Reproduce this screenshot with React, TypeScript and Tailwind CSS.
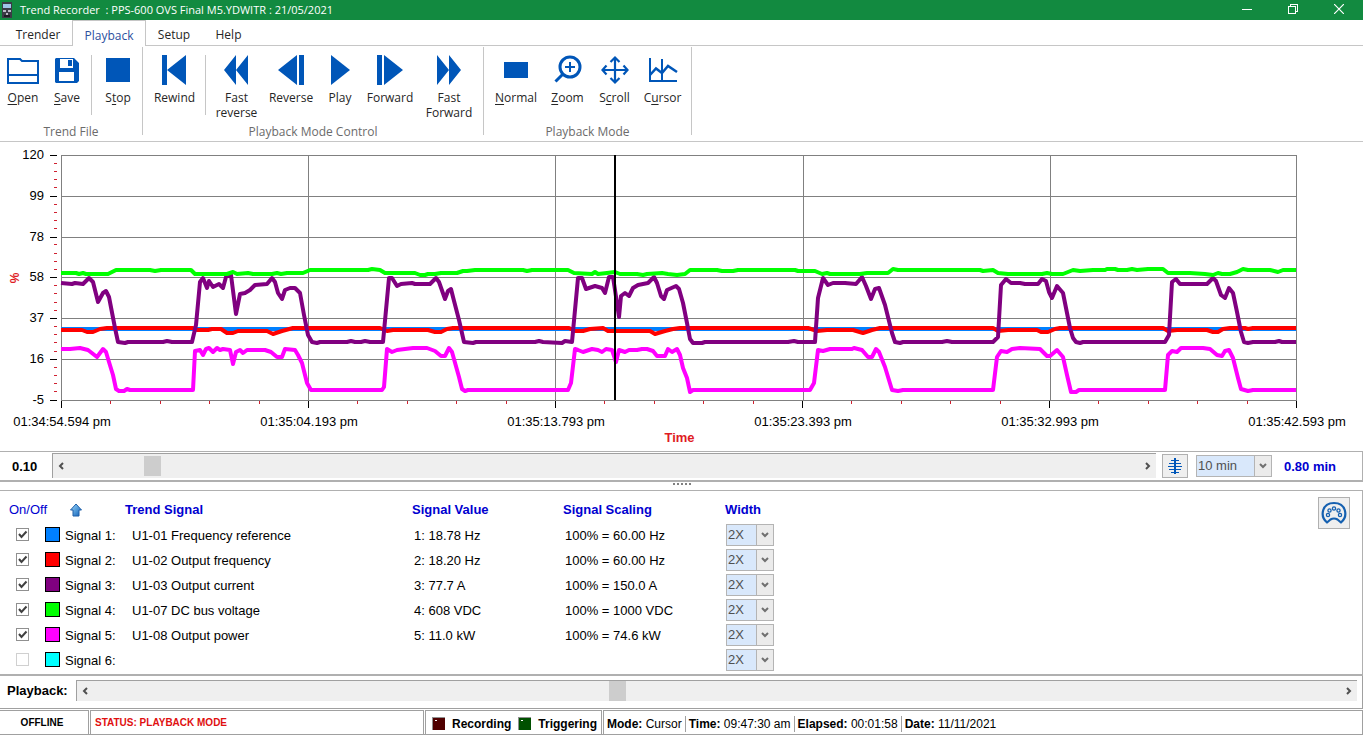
import { useState, type ReactNode } from 'react'
import clsx from 'clsx'

type Tool = {
  label: string
  // index of the underlined access key, if the command has one
  accessKey?: number
  width: string
  icon: ReactNode
  dividerAfter?: boolean
}

const TABS = [
  { name: 'Trender', width: 'w-[72px] pl-1' },
  { name: 'Playback', width: 'w-[74px]' },
  { name: 'Setup', width: 'w-[56px]' },
  { name: 'Help', width: 'w-[53px]' },
]

const TOOL_GROUPS: { title: string; className: string; tools: Tool[] }[] = [
  {
    title: 'Trend File',
    className: 'pr-px',
    tools: [
      {
        label: 'Open',
        accessKey: 0,
        width: 'w-[46px]',
        icon: (
          <svg width="32" height="30" viewBox="0 0 32 30" fill="none" stroke="#0056b8" strokeWidth="2">
            <path d="M1 28V4h12l2 2h16v22zM1 20h30" />
          </svg>
        ),
      },
      {
        label: 'Save',
        accessKey: 0,
        width: 'w-[42px]',
        dividerAfter: true,
        icon: (
          <svg width="26" height="30" viewBox="0 0 26 30" fill="#0056b8">
            <path
              fillRule="evenodd"
              d="M2 3h18l5 5v18l-2 2H2l-1-1V4zM6 4v9h13V4zM5 17v9h15v-9zM14 5h4v6h-4z"
            />
          </svg>
        ),
      },
      {
        label: 'Stop',
        accessKey: 1,
        width: 'w-[46px]',
        icon: (
          <svg width="24" height="30" viewBox="0 0 24 30" fill="#0056b8">
            <path d="M0 3h24v24H0z" />
          </svg>
        ),
      },
    ],
  },
  {
    title: 'Playback Mode Control',
    className: 'pr-[3px] pl-1',
    tools: [
      {
        label: 'Rewind',
        width: 'w-[55px]',
        dividerAfter: true,
        icon: (
          <svg width="25" height="30" viewBox="0 0 25 30" fill="#0056b8">
            <path d="M0 0h5v30H0zM24 0v30L5 15z" />
          </svg>
        ),
      },
      {
        label: 'Fast reverse',
        width: 'w-[55px]',
        icon: (
          <svg width="26" height="30" viewBox="0 0 26 30" fill="#0056b8">
            <path d="M12 0v30L0 15zM24 0v30L12 15z" />
          </svg>
        ),
      },
      {
        label: 'Reverse',
        width: 'w-[54px]',
        icon: (
          <svg width="26" height="30" viewBox="0 0 26 30" fill="#0056b8">
            <path d="M19 0v30L0 15zM21 0h5v30h-5z" />
          </svg>
        ),
      },
      {
        label: 'Play',
        width: 'w-[44px]',
        icon: (
          <svg width="20" height="30" viewBox="0 0 20 30" fill="#0056b8">
            <path d="M1 0v30l19-15z" />
          </svg>
        ),
      },
      {
        label: 'Forward',
        width: 'w-[56px]',
        icon: (
          <svg width="26" height="30" viewBox="0 0 26 30" fill="#0056b8">
            <path d="M0 0h5v30H0zM7 0v30l19-15z" />
          </svg>
        ),
      },
      {
        label: 'Fast Forward',
        width: 'w-[62px]',
        icon: (
          <svg width="24" height="30" viewBox="0 0 24 30" fill="#0056b8">
            <path d="M0 0v30l12-15zM12 0v30l12-15z" />
          </svg>
        ),
      },
    ],
  },
  {
    title: 'Playback Mode',
    className: 'px-1',
    tools: [
      {
        label: 'Normal',
        accessKey: 0,
        width: 'w-[56px]',
        icon: (
          <svg width="24" height="30" viewBox="0 0 24 30" fill="#0056b8">
            <path d="M0 7h24v16H0z" />
          </svg>
        ),
      },
      {
        label: 'Zoom',
        accessKey: 0,
        width: 'w-[47px]',
        icon: (
          <svg width="28" height="30" viewBox="0 0 28 30" fill="none" stroke="#0056b8">
            <circle cx="16" cy="12" r="10" strokeWidth="3" />
            <path d="M16 7v10M11 12h10" strokeWidth="2" />
            <path d="M9 19L1.500 26.500" strokeWidth="3" />
          </svg>
        ),
      },
      {
        label: 'Scroll',
        accessKey: 1,
        width: 'w-[47px]',
        icon: (
          <svg width="28" height="30" viewBox="0 0 28 30" fill="none" stroke="#0056b8" strokeWidth="2.200">
            <path d="M14 3v25M2 15h24M9.500 7L14 2.500 18.500 7M9.500 23l4.500 4.500 4.500-4.500M5.500 10.500L1.500 15l4 4.500M22.500 10.500l4 4.500-4 4.500" />
          </svg>
        ),
      },
      {
        label: 'Cursor',
        accessKey: 1,
        width: 'w-[49px]',
        icon: (
          <svg width="30" height="30" viewBox="0 0 30 30" fill="none" stroke="#0056b8" strokeWidth="2">
            <path d="M2 3v23h27M14 4v22" />
            <path d="M2 20l6-6.500 6 4.500 6-7 9 6" strokeWidth="2.500" />
          </svg>
        ),
      },
    ],
  },
]

const SIGNALS = [
  { on: true, color: 'bg-[#0080ff]', name: 'U1-01 Frequency reference', value: '1: 18.78 Hz', scaling: '100% = 60.00 Hz' },
  { on: true, color: 'bg-[#ff0000]', name: 'U1-02 Output frequency', value: '2: 18.20 Hz', scaling: '100% = 60.00 Hz' },
  { on: true, color: 'bg-[#800080]', name: 'U1-03 Output current', value: '3: 77.7 A', scaling: '100% = 150.0 A' },
  { on: true, color: 'bg-[#00ff00]', name: 'U1-07 DC bus voltage', value: '4: 608 VDC', scaling: '100% = 1000 VDC' },
  { on: true, color: 'bg-[#ff00ff]', name: 'U1-08 Output power', value: '5: 11.0 kW', scaling: '100% = 74.6 kW' },
  { on: false, color: 'bg-[#00ffff]', name: '', value: '', scaling: '' },
]

const Y_LABELS = ['120', '99', '78', '58', '37', '16', '-5']

const TIME_LABELS = [
  '01:34:54.594 pm',
  '01:35:04.193 pm',
  '01:35:13.793 pm',
  '01:35:23.393 pm',
  '01:35:32.993 pm',
  '01:35:42.593 pm',
]

// Grid and traces share the plot's viewBox: x 61..1296, y 155..400
const GRID_X = [61, 308, 555, 803, 1050, 1296]
const GRID_Y = [155, 196, 237, 277, 318, 359, 400]

const TRACES = [
  { color: '#0080ff', points: '61,329 1296,329' },
  {
    color: '#ff0000',
    points:
      '61,330 82,330 87,332 93,332 100,329 107,328 193,328 197,330 208,330 212,329 221,329 227,333 233,333 238,331 267,331 273,334 282,331 293,328 380,328 387,331 393,330 428,330 435,332 441,332 447,329 453,328 569,328 575,331 583,331 590,329 603,328 608,331 650,331 655,334 665,331 673,329 680,328 808,328 817,331 827,330 853,330 863,333 872,330 880,328 993,328 998,331 1008,330 1037,330 1041,332 1048,332 1055,329 1060,328 1163,328 1168,331 1177,330 1207,330 1213,332 1218,332 1223,329 1230,328 1245,328 1248,329 1253,328 1296,328',
  },
  {
    color: '#800080',
    points:
      '61,283 72,284 75,283 83,284 89,278 93,282 98,302 103,293 106,291 109,297 115,328 118,342 125,343 128,342 163,342 167,341 172,342 192,342 196,325 200,282 203,278 207,288 209,281 213,287 219,284 223,288 226,277 231,275 236,314 240,294 245,293 250,290 255,285 267,284 272,278 275,282 278,293 282,299 285,290 290,288 295,288 300,293 304,315 308,335 312,342 317,343 320,342 347,342 351,341 355,342 361,342 365,341 370,342 383,342 389,278 392,278 397,286 401,284 412,283 415,284 430,284 436,278 439,282 445,299 448,291 451,289 453,297 459,320 464,342 473,343 476,342 535,342 539,341 543,342 562,343 565,341 572,342 578,278 582,278 586,289 595,286 602,288 605,293 609,277 613,277 615,290 619,317 621,296 625,293 629,296 633,288 638,285 648,283 654,277 657,283 661,296 664,299 667,290 676,286 679,289 683,303 687,323 690,339 693,343 702,343 705,342 788,342 794,341 798,342 815,342 818,298 823,278 828,285 833,283 845,283 856,284 862,277 866,286 871,299 875,289 879,288 885,305 892,333 895,342 900,343 903,342 942,342 947,341 952,342 993,342 998,337 1001,285 1006,279 1011,283 1020,283 1025,284 1038,284 1042,279 1046,281 1049,292 1052,298 1057,286 1063,293 1070,328 1073,338 1076,342 1080,343 1083,342 1165,342 1169,335 1172,282 1176,279 1180,284 1207,284 1213,278 1216,281 1221,295 1225,298 1229,288 1233,293 1237,312 1241,332 1244,342 1248,343 1253,342 1275,342 1279,341 1282,342 1296,342',
  },
  {
    color: '#00ff00',
    points:
      '61,273 76,273 79,274 83,273 86,274 108,274 116,270 150,270 155,271 161,270 191,270 195,274 227,274 233,272 237,274 248,273 253,274 272,274 277,273 281,274 287,273 303,273 310,270 368,270 372,269 380,270 385,273 415,273 420,275 425,275 428,274 435,274 441,273 457,273 463,271 467,271 475,270 523,270 527,271 532,270 568,270 574,273 592,274 595,272 598,274 607,273 615,272 620,274 637,274 643,275 647,274 662,273 668,274 677,275 685,274 690,270 717,270 722,271 733,271 738,270 795,270 798,271 815,271 822,274 827,273 830,274 860,274 867,273 888,273 893,269 898,270 980,270 983,271 993,270 998,273 1008,274 1042,274 1047,273 1052,274 1063,274 1073,270 1080,271 1093,270 1105,270 1107,269 1115,269 1118,270 1127,270 1132,269 1137,270 1148,269 1163,269 1168,273 1190,273 1205,274 1213,275 1218,273 1222,274 1230,274 1237,272 1243,269 1248,270 1270,270 1278,272 1283,270 1296,270',
  },
  {
    color: '#ff00ff',
    points:
      '61,349 70,349 80,348 88,350 97,357 103,349 106,352 109,362 113,375 116,389 119,391 124,391 127,389 130,390 193,390 195,351 200,350 203,355 206,349 209,348 213,352 217,348 220,350 223,349 230,350 233,364 236,352 240,350 243,353 247,350 265,350 271,352 277,357 282,357 285,349 295,350 298,355 302,363 307,383 311,390 382,390 384,387 387,349 392,352 397,350 413,348 427,348 435,351 441,356 445,356 449,348 452,352 459,377 462,389 465,391 468,390 568,390 571,383 575,349 578,350 583,352 592,349 598,350 602,352 606,349 612,350 616,362 619,350 625,352 629,350 637,350 642,349 647,349 653,351 657,356 665,356 668,349 672,352 677,349 680,355 683,368 687,378 690,392 693,390 810,390 814,383 818,350 823,351 830,349 852,349 854,348 862,350 868,357 872,357 876,349 879,352 885,367 892,390 898,391 903,390 993,390 997,357 1001,351 1007,352 1012,349 1020,348 1040,349 1047,356 1050,356 1057,350 1063,357 1067,375 1071,392 1076,392 1079,390 1165,390 1168,355 1172,351 1177,352 1181,348 1203,348 1210,349 1217,355 1222,356 1225,351 1229,350 1233,358 1238,378 1241,389 1248,391 1253,390 1296,390',
  },
]

const range = (n: number) => Array.from({ length: n }, (_, i) => i)

function AccessLabel({ text, accessKey }: { text: string; accessKey?: number }) {
  if (accessKey === undefined) return <>{text}</>
  return (
    <>
      {text.slice(0, accessKey)}
      <span className="underline underline-offset-2">{text[accessKey]}</span>
      {text.slice(accessKey + 1)}
    </>
  )
}

function TitleBar() {
  return (
    <header className="flex h-5 items-center bg-[#128a40] pl-0.5 font-['Open_Sans',sans-serif] text-[11px] text-white">
      <svg width="10" height="16" viewBox="0 0 10 16" className="mr-2">
        <path d="M0 0h10v16H0z" fill="#3b3b46" />
        <path d="M1 2h8v4H1z" fill="#9fc4ea" />
        <path d="M1 8h3v2H1zM6 8h3v2H6zM4 11h2v2H4z" fill="#b9b9c4" />
        <path d="M2 13h6v2H2z" fill="#1c1c22" />
      </svg>
      <h1 className="flex-1 whitespace-pre leading-4">Trend Recorder  : PPS-600 OVS Final M5.YDWITR : 21/05/2021</h1>
      <button type="button" aria-label="Minimize" className="flex h-4 w-[46px] items-center justify-center">
        <svg width="10" height="10" viewBox="0 0 10 10" stroke="white" shapeRendering="crispEdges">
          <path d="M0 4.500h10" />
        </svg>
      </button>
      <button type="button" aria-label="Restore" className="flex h-4 w-[45px] items-start justify-center pt-0.5">
        <svg width="10" height="10" viewBox="0 0 10 10" fill="none" stroke="white" shapeRendering="crispEdges">
          <path d="M.5 2.500h7v7h-7zM2.500 2.500v-2h7v7h-2" />
        </svg>
      </button>
      <button type="button" aria-label="Close" className="flex h-4 w-12 items-start justify-center pt-0.5">
        <svg width="10" height="10" viewBox="0 0 10 10" stroke="white" strokeWidth="1.200">
          <path d="M0 0l10 10M10 0L0 10" />
        </svg>
      </button>
    </header>
  )
}

function Ribbon() {
  const [tab, setTab] = useState('Playback')

  return (
    <div className="border-b border-[#c6c6c6] font-['Open_Sans',sans-serif] text-xs text-[#262626]">
      <nav className="flex h-[26px] items-stretch">
        {TABS.map(({ name, width }) => (
          <button
            key={name}
            type="button"
            onClick={() => setTab(name)}
            className={clsx(
              width,
              'border-[#c6c6c6] pt-1',
              tab === name ? 'border-x border-t text-[#2b4f9e]' : 'border-b pt-[5px]',
            )}
          >
            {name}
          </button>
        ))}
        <div className="flex-1 border-b border-[#c6c6c6]" />
      </nav>
      <div className="flex h-[95px] pt-px">
        {TOOL_GROUPS.map((group) => (
          <section key={group.title} className="flex h-[88px] flex-col border-r border-[#c6c6c6]">
            <div className={clsx('flex h-[78px] shrink-0 pt-2', group.className)}>
              {group.tools.map((tool) => (
                <div key={tool.label} className="flex items-start">
                  <button type="button" className={clsx(tool.width, 'flex flex-col items-center')}>
                    {tool.icon}
                    <span className="mt-[5px] px-1 leading-[15px]">
                      <AccessLabel text={tool.label} accessKey={tool.accessKey} />
                    </span>
                  </button>
                  {tool.dividerAfter && <div className="mx-[3px] h-[60px] w-px bg-[#c6c6c6]" />}
                </div>
              ))}
            </div>
            <h2 className="text-center leading-[14px] text-[#6b6b6b]">{group.title}</h2>
          </section>
        ))}
      </div>
    </div>
  )
}

function TrendChart() {
  return (
    <section className="bg-white pt-[13px] pb-[5px]">
      <div className="flex h-[245px]">
        <div className="flex w-[30px] items-center justify-center">
          <span className="-rotate-90 text-xs font-bold text-[#e01b24]">%</span>
        </div>
        <ol className="flex w-[14px] flex-col justify-between text-right">
          {Y_LABELS.map((label) => (
            <li key={label} className="flex h-0 items-center justify-end">
              {label}
            </li>
          ))}
        </ol>
        <svg width="17" height="245" viewBox="0 155 17 245" className="overflow-visible" shapeRendering="crispEdges">
          {range(31).map((i) => {
            const y = Math.floor(155 + (i * 245) / 30) + 0.5
            return i % 5 === 0 ? (
              <path key={i} d={`M6 ${GRID_Y[i / 5] + 0.5}h7`} stroke="black" />
            ) : (
              <path key={i} d={`M10 ${y}h3`} stroke="#d02030" />
            )
          })}
        </svg>
        <svg
          viewBox="61 155 1235 245"
          preserveAspectRatio="none"
          className="mr-[67px] h-full min-w-0 flex-1 overflow-visible"
          fill="none"
          role="img"
          aria-label="Signal trends"
        >
          <g stroke="#808080" shapeRendering="crispEdges">
            {GRID_Y.map((y) => (
              <path key={y} d={`M61 ${y + 0.5}H1297`} vectorEffect="non-scaling-stroke" />
            ))}
            {GRID_X.map((x) => (
              <path key={x} d={`M${x + 0.5} 155V400`} vectorEffect="non-scaling-stroke" />
            ))}
          </g>
          {TRACES.map((trace) => (
            <polyline
              key={trace.color}
              points={trace.points}
              stroke={trace.color}
              strokeWidth="4"
              strokeLinejoin="round"
              vectorEffect="non-scaling-stroke"
            />
          ))}
          <path d="M615 155V400" stroke="black" strokeWidth="2" vectorEffect="non-scaling-stroke" />
        </svg>
      </div>

      <div className="mr-[66px] ml-[62px]">
        <svg
          viewBox="1 0 1235 8"
          preserveAspectRatio="none"
          className="block h-2 w-full overflow-visible"
          shapeRendering="crispEdges"
        >
          {range(26).map((i) => {
            const x = Math.round(i * 49.4) + 0.5
            return i % 5 === 0 ? (
              <path key={i} d={`M${x} 1v7`} stroke="black" vectorEffect="non-scaling-stroke" />
            ) : (
              <path key={i} d={`M${x} 1v3`} stroke="#d02030" vectorEffect="non-scaling-stroke" />
            )
          })}
        </svg>
        <ol className="mt-[6px] flex justify-between leading-4">
          {TIME_LABELS.map((label) => (
            <li key={label} className="flex w-0 justify-center whitespace-nowrap">
              {label}
            </li>
          ))}
        </ol>
        <p className="text-center leading-4 font-bold text-[#e01b24]">Time</p>
      </div>
    </section>
  )
}

function Chevron({ d }: { d: string }) {
  return (
    <svg width="8" height="8" viewBox="0 0 8 8" fill="none" stroke="#505050" strokeWidth="2">
      <path d={d} />
    </svg>
  )
}

function ScrollBar({ label, initial, className }: { label: string; initial: number; className?: string }) {
  const [value, setValue] = useState(initial)
  const move = (step: number) => setValue((v) => Math.min(100, Math.max(0, v + step)))

  return (
    <div className={clsx('flex min-w-0 flex-1 items-stretch border-t border-l border-[#a0a0a0] bg-[#efefef] pl-px', className)}>
      <button type="button" aria-label={`${label} back`} onClick={() => move(-1)} className="flex w-4 items-center pl-[3px]">
        <Chevron d="M6 1L3 4l3 3" />
      </button>
      <input
        type="range"
        aria-label={label}
        min={0}
        max={100}
        step={0.05}
        value={value}
        onChange={(e) => setValue(Number(e.target.value))}
        className="h-full min-w-0 flex-1 appearance-none bg-transparent [&::-webkit-slider-thumb]:h-5 [&::-webkit-slider-thumb]:w-[17px] [&::-webkit-slider-thumb]:appearance-none [&::-webkit-slider-thumb]:bg-[#cdcdcd]"
      />
      <button type="button" aria-label={`${label} forward`} onClick={() => move(1)} className="flex w-4 items-center justify-end pr-1">
        <Chevron d="M2 1l3 3-3 3" />
      </button>
    </div>
  )
}

function DropDown({ label, options, className }: { label: string; options: string[]; className: string }) {
  return (
    <div className={clsx('relative h-[22px]', className)}>
      <select
        aria-label={label}
        className="block h-full w-full appearance-none border border-[#b4b4b4] bg-[#d9e8fb] pl-px text-[#505050]"
      >
        {options.map((option) => (
          <option key={option}>{option}</option>
        ))}
      </select>
      <span className="pointer-events-none absolute inset-y-0 right-0 flex w-[18px] items-center justify-center border border-[#b4b4b4] bg-[#ebebeb]">
        <svg width="8" height="8" viewBox="0 0 8 8" fill="none" stroke="#707070" strokeWidth="2">
          <path d="M1 2l3 3 3-3" />
        </svg>
      </span>
    </div>
  )
}

function TimeScaleBar() {
  return (
    <section className="flex h-[31px] items-start border-t border-r border-b-2 border-[#b0b0b0]">
      <span className="w-[52px] pt-[7px] pl-3 leading-4 font-bold">0.10</span>
      <ScrollBar label="Trend position" initial={7} className="mt-px h-[25px]" />
      <button
        type="button"
        aria-label="Compress time scale"
        className="mt-0.5 ml-[6px] flex h-6 w-[26px] items-center justify-center border border-[#b0b0b0] bg-[#efefef]"
      >
        <svg width="14" height="16" viewBox="0 0 14 16" fill="none" stroke="#0056b8" shapeRendering="crispEdges">
          <path d="M7 0v16" strokeWidth="2" />
          <path d="M3 2.500h8M1 5.500h12M0 8.500h14M1 11.500h12M3 14.500h8" />
        </svg>
      </button>
      <DropDown label="Time span" options={['10 min', '5 min', '1 min']} className="mt-[3px] ml-2 w-[76px]" />
      <span className="w-[90px] pt-[7px] pl-3 leading-4 font-bold text-[#0000d0]">0.80 min</span>
    </section>
  )
}

function SignalTable() {
  const [enabled, setEnabled] = useState(SIGNALS.map((s) => s.on))

  return (
    <section className="flex items-start justify-between border-t border-r border-b-2 border-[#b0b0b0] pt-[6px] pr-3 pb-[2px]">
      <table className="table-fixed text-left">
        <colgroup>
          <col className="w-[45px]" />
          <col className="w-[80px]" />
          <col className="w-[287px]" />
          <col className="w-[151px]" />
          <col className="w-[162px]" />
          <col className="w-[50px]" />
        </colgroup>
        <thead>
          <tr className="h-[25px] text-[#0000d0]">
            <th colSpan={2} className="pl-[9px] font-normal">
              <span className="flex items-center gap-[22px]">
                <span className="font-medium">On/Off</span>
                <button type="button" aria-label="Move signals up">
                  <svg width="14" height="14" viewBox="0 0 14 14" className="block">
                    <defs>
                      <linearGradient id="arrow" x1="0" y1="0" x2="1" y2="1">
                        <stop offset="0" stopColor="#9fdcff" />
                        <stop offset="1" stopColor="#0a5cb4" />
                      </linearGradient>
                    </defs>
                    <path d="M7 1l5.500 6H10v6H4V7H1.500z" fill="url(#arrow)" stroke="#1f5fa8" />
                  </svg>
                </button>
              </span>
            </th>
            <th>Trend Signal</th>
            <th>Signal Value</th>
            <th>Signal Scaling</th>
            <th>Width</th>
          </tr>
        </thead>
        <tbody>
          {SIGNALS.map((signal, i) => (
            <tr key={i} className="h-[25px]">
              <td className="pl-4">
                <span className="grid size-[13px]">
                  <input
                    id={`signal-${i}`}
                    type="checkbox"
                    checked={enabled[i]}
                    onChange={() => setEnabled(enabled.map((on, j) => (j === i ? !on : on)))}
                    className={clsx(
                      'col-start-1 row-start-1 size-[13px] appearance-none border bg-white',
                      enabled[i] ? 'border-[#909090]' : 'border-[#d0d0d0]',
                    )}
                  />
                  {enabled[i] && (
                    <svg
                      viewBox="0 0 13 13"
                      className="pointer-events-none col-start-1 row-start-1 size-[13px]"
                      fill="none"
                      stroke="#404040"
                      strokeWidth="2"
                    >
                      <path d="M3 6l2.500 3L10.500 3.500" />
                    </svg>
                  )}
                </span>
              </td>
              <td>
                <label htmlFor={`signal-${i}`} className="flex items-center gap-[5px]">
                  <span className={clsx('size-[15px] border border-black', signal.color)} />
                  <span className="pt-0.5">Signal {i + 1}:</span>
                </label>
              </td>
              <td className="pt-0.5 pl-[7px]">{signal.name}</td>
              <td className="pt-0.5 pl-0.5">{signal.value}</td>
              <td className="pt-0.5 pl-0.5">{signal.scaling}</td>
              <td className="pl-px">
                <DropDown label={`Signal ${i + 1} width`} options={['2X', '1X', '3X']} className="w-12" />
              </td>
            </tr>
          ))}
        </tbody>
      </table>
      <button
        type="button"
        aria-label="Signal colours"
        className="flex size-8 items-center justify-center border border-[#b0b0b0] bg-[#efefef]"
      >
        <svg width="26" height="24" viewBox="0 0 26 24" fill="none" stroke="#1560b0">
          <path
            d="M6 21.500C-1.500 15 1 2 13 2s14.500 13 7 19.500l-3.500-3q-3.500-2-7 0z"
            strokeWidth="2.200"
            strokeLinejoin="round"
          />
          <g strokeWidth="1.300">
            <circle cx="7" cy="14" r="1.600" />
            <circle cx="8.500" cy="9.500" r="1.600" />
            <circle cx="13" cy="7.500" r="1.600" />
            <circle cx="17.500" cy="9.500" r="1.600" />
            <circle cx="19" cy="14" r="1.600" />
          </g>
        </svg>
      </button>
    </section>
  )
}

function Lamp({ label, color }: { label: string; color: string }) {
  return (
    <span className="flex items-center gap-[7px] font-bold">
      <svg width="13" height="13" viewBox="0 0 13 13" shapeRendering="crispEdges">
        <path d="M0 0h13v13H0z" fill="#909090" />
        <path d="M1 1h12v12H1z" fill={color} />
        <path d="M3 3h2v1H3z" fill="white" />
      </svg>
      {label}
    </span>
  )
}

function StatusBar() {
  return (
    <footer className="mt-px flex h-[25px] items-stretch border-b border-[#a0a0a0] text-xs">
      <div className="flex w-[89px] items-center justify-center border-t border-r border-[#a0a0a0] pr-1 text-[10px] font-bold">
        OFFLINE
      </div>
      <div className="ml-px flex w-[334px] items-center border-x border-t border-[#a0a0a0] pl-1 text-[10px] font-bold text-[#e01010]">
        STATUS: PLAYBACK MODE
      </div>
      <div className="ml-px flex w-[177px] items-center gap-[7px] border-x border-t border-[#a0a0a0] pt-0.5 pl-[6px]">
        <Lamp label="Recording" color="#500000" />
        <Lamp label="Triggering" color="#005000" />
      </div>
      <div className="ml-px flex flex-1 items-center divide-x divide-[#a0a0a0] border-x border-t border-[#a0a0a0] pt-0.5 whitespace-nowrap">
        {[
          ['Mode:', 'Cursor'],
          ['Time:', '09:47:30 am'],
          ['Elapsed:', '00:01:58'],
          ['Date:', '11/11/2021'],
        ].map(([name, value]) => (
          <span key={name} className="px-[3px]">
            <b>{name}</b> {value}
          </span>
        ))}
      </div>
    </footer>
  )
}

export default function App() {
  return (
    <div className="w-full overflow-hidden bg-white font-['Liberation_Sans',Arial,sans-serif] text-[13px] leading-4 text-black">
      <TitleBar />
      <Ribbon />
      <TrendChart />
      <TimeScaleBar />
      <div className="flex h-2 items-center justify-center gap-0.5 pb-1">
        {range(5).map((i) => (
          <span key={i} className="size-0.5 bg-[#808080]" />
        ))}
      </div>
      <SignalTable />
      <section className="flex h-[33px] items-start border-r border-b border-[#a0a0a0] pt-1 pr-[5px]">
        <span className="w-[76px] pt-[3px] pl-[7px] font-bold">Playback:</span>
        <ScrollBar label="Playback position" initial={41.9} className="h-[21px]" />
      </section>
      <StatusBar />
    </div>
  )
}
